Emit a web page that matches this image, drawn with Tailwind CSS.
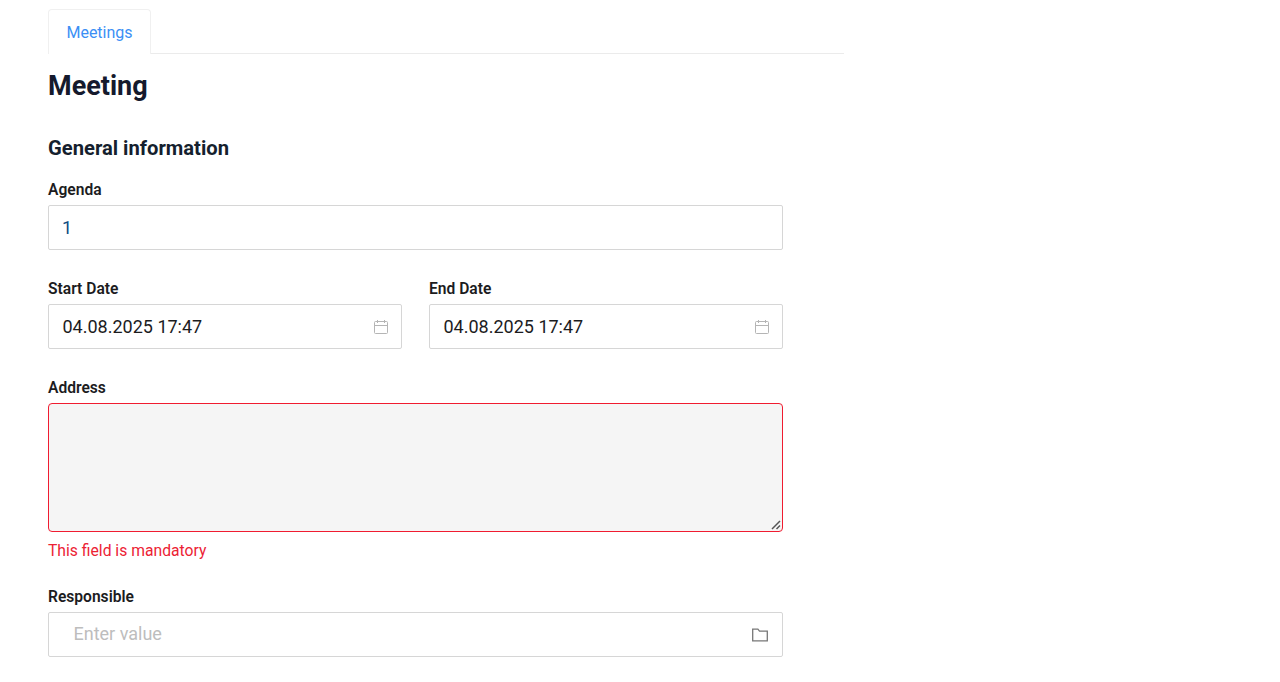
<!DOCTYPE html>
<html lang="en">
<head>
  <meta charset="UTF-8" />
  <title>Meeting</title>
  <script src="https://cdn.jsdelivr.net/npm/@tailwindcss/browser@4"></script>
</head>
<body class="bg-white font-['Roboto',sans-serif]">
  <div class="w-[796px] ml-12 pt-[9px]">

    <!-- Tabs -->
    <div class="flex h-[45px] border-b border-[#ebebeb]">
      <div class="w-[103px] h-[45px] pt-[2px] flex items-center justify-center border border-b-0 border-[#f0f0f0] rounded-t bg-white text-[16px] text-[#3b8ff5]">Meetings</div>
    </div>

    <h1 class="mt-[14px] h-[36px] leading-[36px] text-[27px] font-bold text-[#151a2d]">Meeting</h1>

    <div class="w-[735px]">
      <h2 class="mt-[30px] h-[28px] leading-[28px] text-[20.2px] font-bold text-[#151f2e]">General information</h2>

      <!-- Agenda -->
      <label class="block mt-[17px] h-[20px] leading-[22px] text-[15.6px] font-semibold text-[#1c1c1e]">Agenda</label>
      <div class="mt-[6px] h-[45px] flex items-center pl-[13px] border border-[#d6d6d6] rounded-[2px] text-[18px] text-[#0f4c81]">1</div>

      <!-- Dates -->
      <div class="mt-[28px] grid grid-cols-2 gap-[27px]">
        <div>
          <label class="block h-[20px] leading-[22px] text-[15.6px] font-semibold text-[#1c1c1e]">Start Date</label>
          <div class="mt-[6px] h-[45px] flex items-center justify-between pl-[13.5px] pr-[12px] border border-[#d6d6d6] rounded-[2px] text-[18px] text-[#1c1c1e]">
            <span>04.08.2025 17:47</span>
            <svg width="16" height="16" viewBox="0 0 16 16" fill="none" stroke="#b5b5b5" stroke-width="1"><rect x="1.5" y="2.5" width="13" height="12" rx="1"/><path d="M1.5 6.5h13M4.5 1v3M11.5 1v3"/></svg>
          </div>
        </div>
        <div>
          <label class="block h-[20px] leading-[22px] text-[15.6px] font-semibold text-[#1c1c1e]">End Date</label>
          <div class="mt-[6px] h-[45px] flex items-center justify-between pl-[13.5px] pr-[12px] border border-[#d6d6d6] rounded-[2px] text-[18px] text-[#1c1c1e]">
            <span>04.08.2025 17:47</span>
            <svg width="16" height="16" viewBox="0 0 16 16" fill="none" stroke="#b5b5b5" stroke-width="1"><rect x="1.5" y="2.5" width="13" height="12" rx="1"/><path d="M1.5 6.5h13M4.5 1v3M11.5 1v3"/></svg>
          </div>
        </div>
      </div>

      <!-- Address -->
      <label class="block mt-[28px] h-[20px] leading-[22px] text-[15.6px] font-semibold text-[#1c1c1e]">Address</label>
      <div class="relative mt-[6px] h-[129px] bg-[#f5f5f5] border border-[#f01c30] rounded-[4px]">
        <svg class="absolute right-[1px] bottom-[1px]" width="10" height="10" viewBox="0 0 10 10" fill="none" stroke="#555" stroke-width="1.5"><path d="M1 9L9 1M5.5 9L9 5.5"/></svg>
      </div>
      <p class="mt-[9px] h-[20px] leading-[20px] text-[15.7px] text-[#ec2234]">This field is mandatory</p>

      <!-- Responsible -->
      <label class="block mt-[25px] h-[20px] leading-[22px] text-[15.6px] font-semibold text-[#1c1c1e]">Responsible</label>
      <div class="mt-[6px] h-[45px] flex items-center justify-between pl-[24.5px] pr-[14px] border border-[#d6d6d6] rounded-[2px] text-[18px] text-[#bdbdbd]">
        <span class="mb-[2px]">Enter value</span>
        <svg width="16" height="14" viewBox="0 0 16 14" fill="none" stroke="#777" stroke-width="1.3"><path d="M.7 12.8V1.2h5.2l1.6 2h7.8v9.6z"/></svg>
      </div>
    </div>
  </div>
</body>
</html>
